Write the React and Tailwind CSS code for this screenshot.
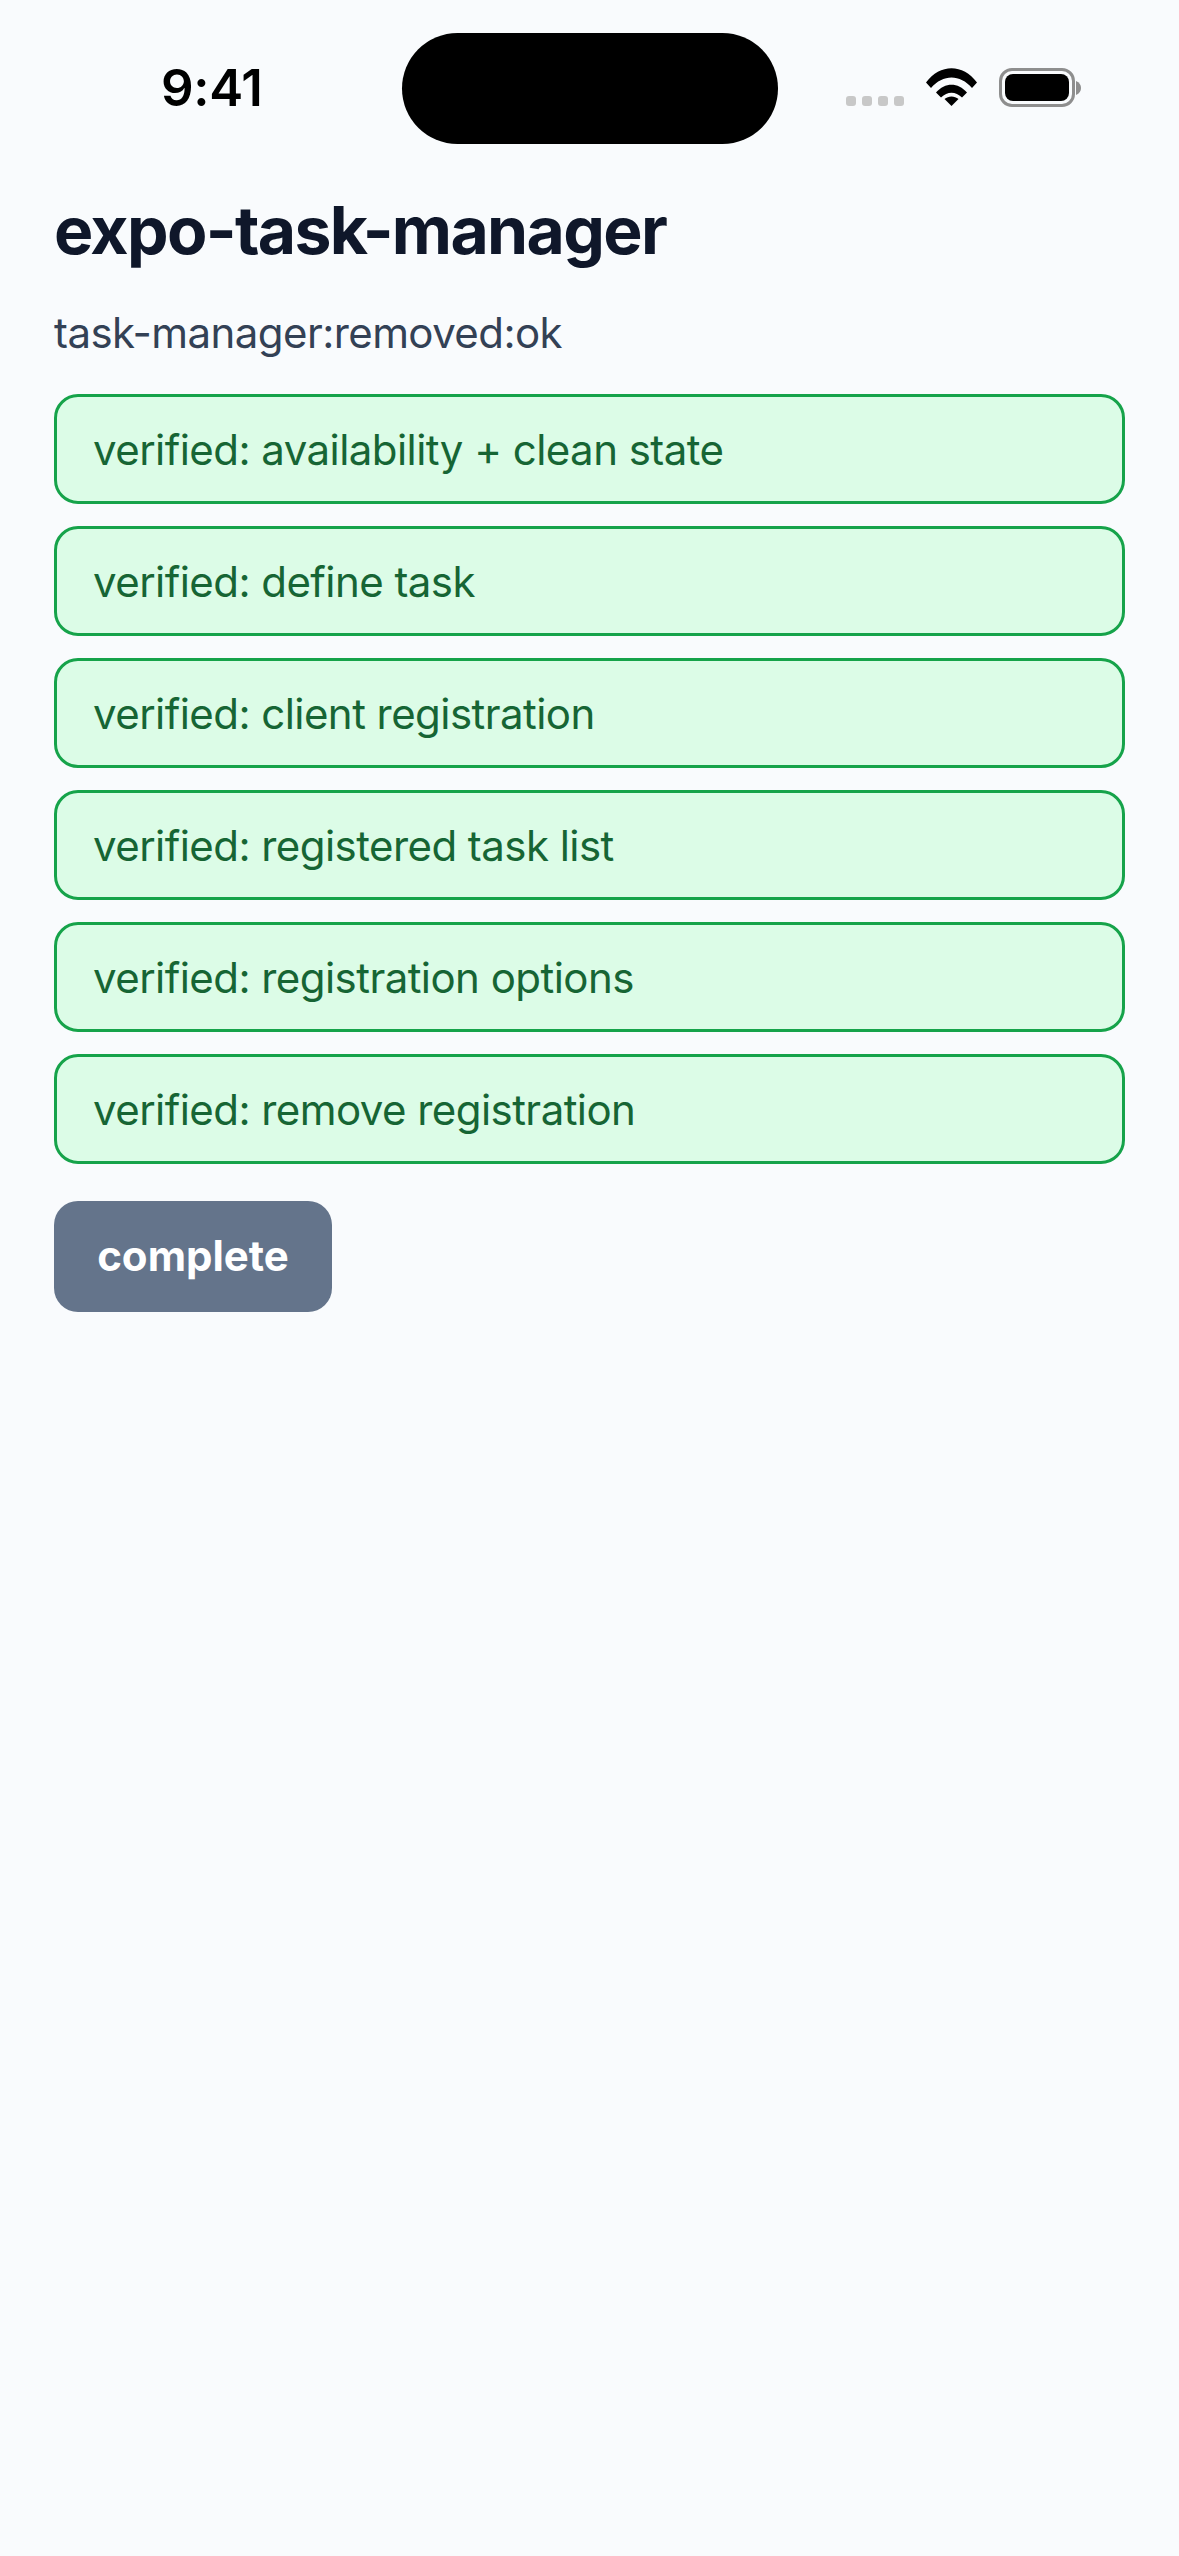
const checks = [
  "verified: availability + clean state",
  "verified: define task",
  "verified: client registration",
  "verified: registered task list",
  "verified: registration options",
  "verified: remove registration",
];

function WifiIcon() {
  return (
    <svg width="51" height="38" viewBox="0 0 51 38" className="ml-[22px] mt-[68px]">
      <path d="M0 14.5 C14 -4.5 37 -4.5 51 14.5 L46 20 C34 6 17 6 5 20 Z" fill="#000" />
      <path d="M10 24.5 C19 14 32 14 41 24.5 L36 29.5 C29.5 23 21.5 23 15 29.5 Z" fill="#000" />
      <path d="M25.5 38 L18.5 31 C22.5 27.5 28.5 27.5 32.5 31 Z" fill="#000" />
    </svg>
  );
}

function BatteryIcon() {
  return (
    <div className="ml-[22px] mt-[68px] flex items-center">
      <div className="w-[76px] h-[39px] rounded-[13px] border-[3px] border-[#8e8e8e] p-[3px]">
        <div className="w-full h-full rounded-[8px] bg-black" />
      </div>
      <svg width="6" height="14" viewBox="0 0 6 14" className="ml-[1px]">
        <path d="M0 0 C3.5 1.5 5 4 5 7 C5 10 3.5 12.5 0 14 Z" fill="#8e8e8e" />
      </svg>
    </div>
  );
}

function StatusBar() {
  return (
    <div className="h-[144px] flex items-start pl-[161px]">
      <div className="w-[241px] mt-[60px] text-[51px] leading-[56px] font-semibold tracking-[-0.3px] text-black">9:41</div>
      <div className="w-[376px] h-[111px] mt-[33px] rounded-full bg-black" />
      <div className="ml-[68px] mt-[96px] flex gap-[6px]">
        <div className="w-[10px] h-[10px] rounded-[3px] bg-[#c8c8c8]" />
        <div className="w-[10px] h-[10px] rounded-[3px] bg-[#c8c8c8]" />
        <div className="w-[10px] h-[10px] rounded-[3px] bg-[#c8c8c8]" />
        <div className="w-[10px] h-[10px] rounded-[3px] bg-[#c8c8c8]" />
      </div>
      <WifiIcon />
      <BatteryIcon />
    </div>
  );
}

export default function App() {
  return (
    <div className="min-h-[2556px] bg-[#f9fbfd] font-['Inter',sans-serif]">
      <StatusBar />
      <div className="px-[54px] pt-[46px]">
        <h1 className="text-[66px] leading-[80px] font-bold tracking-[-1.65px] text-[#0f172a]">expo-task-manager</h1>
        <p className="mt-[36px] text-[42px] leading-[54px] tracking-[-0.57px] text-[#334155]">task-manager:removed:ok</p>

        <div className="mt-[34px] flex flex-col gap-[22px]">
          {checks.map((label) => (
            <div
              key={label}
              className="h-[110px] flex items-center px-[36px] rounded-[24px] border-[3px] border-[#16a34a] bg-[#dcfce7] text-[42px] tracking-[-0.55px] text-[#166534]"
            >
              {label}
            </div>
          ))}
        </div>

        <button className="mt-[37px] w-[278px] h-[111px] pb-[3px] rounded-[24px] bg-[#64748b] text-white text-[42px] font-bold">
          complete
        </button>
      </div>
    </div>
  );
}
